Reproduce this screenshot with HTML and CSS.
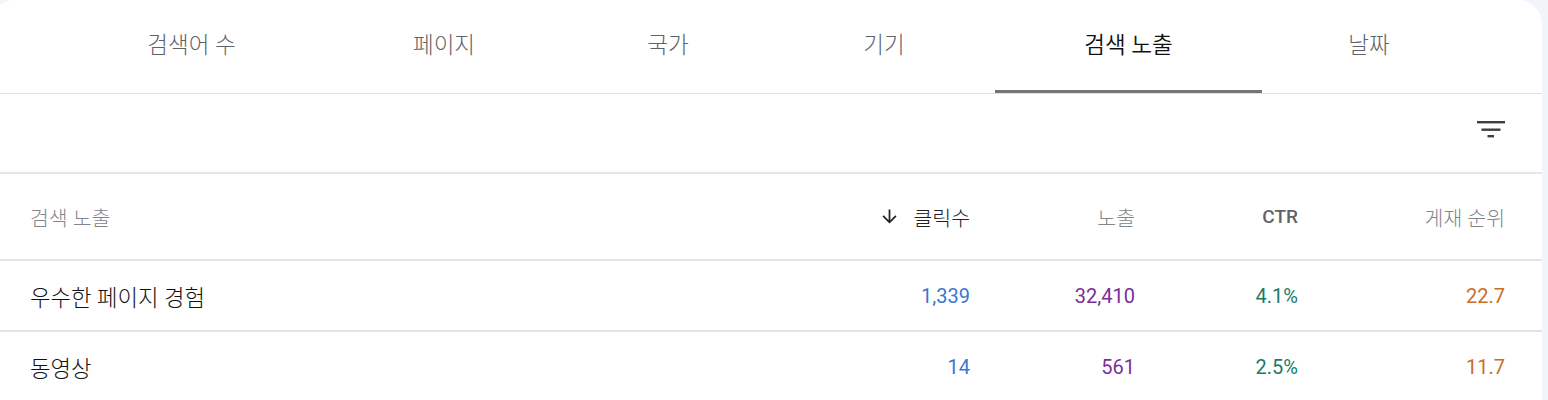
FILE: index.html
```html
<!DOCTYPE html>
<html lang="ko">
<head>
<meta charset="utf-8">
<link rel="stylesheet" href="styles.css">
</head>
<body>
<div class="card">
  <nav class="tabs">
    <div class="tab t1">검색어 수</div>
    <div class="tab t2">페이지</div>
    <div class="tab t3">국가</div>
    <div class="tab t4">기기</div>
    <div class="tab t5 active">검색 노출</div>
    <div class="tab t6">날짜</div>
  </nav>
  <div class="toolbar">
    <svg class="filter" width="30" height="20" viewBox="0 0 30 20">
      <rect x="1" y="2" width="28" height="2.4" fill="#3c4043"/>
      <rect x="5.5" y="9.5" width="19" height="2.4" fill="#3c4043"/>
      <rect x="11.5" y="16" width="6.5" height="2.4" fill="#3c4043"/>
    </svg>
  </div>
  <div class="row head">
    <div class="cell label ko">검색 노출</div>
    <div class="cell num sorted">
      <svg class="arrow" width="21" height="21" viewBox="0 0 24 24"><path d="M20 12l-1.41-1.41L13 16.17V4h-2v12.17l-5.58-5.59L4 12l8 8 8-8z" fill="#202124"/></svg>
      <span class="ko">클릭수</span>
    </div>
    <div class="cell num ko">노출</div>
    <div class="cell num ctr">CTR</div>
    <div class="cell num ko">게재 순위</div>
  </div>
  <div class="row data">
    <div class="cell label ko">우수한 페이지 경험</div>
    <div class="cell num clicks">1,339</div>
    <div class="cell num impr">32,410</div>
    <div class="cell num rate">4.1%</div>
    <div class="cell num pos">22.7</div>
  </div>
  <div class="row data">
    <div class="cell label ko">동영상</div>
    <div class="cell num clicks">14</div>
    <div class="cell num impr">561</div>
    <div class="cell num rate">2.5%</div>
    <div class="cell num pos">11.7</div>
  </div>
</div>
</body>
</html>
```
FILE: styles.css
```css
html, body {
  margin: 0;
  padding: 0;
}
body {
  background: #f1f4fb;
  font-family: Roboto, "Noto Sans CJK KR", sans-serif;
  padding-right: 6px;
  height: 400px;
  overflow: hidden;
}
.card {
  background: #ffffff;
  margin-left: -10px;
  border-radius: 24px 24px 0 0;
  height: 420px;
}
.tabs {
  display: flex;
  height: 93px;
  padding-left: 68px;
  border-bottom: 1px solid #e0e0e0;
}
.tab {
  display: flex;
  align-items: center;
  justify-content: center;
  font-size: 22.5px;
  font-weight: 300;
  color: #5f6368;
  box-sizing: border-box;
  border-bottom: 3px solid transparent;
  padding-bottom: 5px;
}
.t1 { width: 267px; }
.t2 { width: 238px; }
.t3 { width: 210px; }
.t4 { width: 222px; }
.t5 { width: 267px; }
.t6 { width: 214px; }
.tab.active {
  color: #111111;
  font-weight: 350;
  border-bottom-color: #757575;
}
.toolbar {
  display: flex;
  justify-content: flex-end;
  align-items: center;
  height: 78px;
  padding-right: 36px;
  border-bottom: 2px solid #e6e6e6;
}
.filter {
  display: block;
  margin-bottom: 8px;
}
.row {
  display: grid;
  grid-template-columns: 1fr 165px 165px 163px 207px;
  padding: 0 37px 0 40px;
  align-items: center;
  border-bottom: 2px solid #e3e3e3;
}
.row.head {
  height: 85px;
  font-size: 17.5px;
  color: #80868b;
}
.row.head .ko {
  font-size: 20.5px;
  font-weight: 300;
}
.row.data {
  height: 69px;
  font-size: 20px;
  color: #202124;
}
.row.data .ko {
  font-size: 22.3px;
  font-weight: 300;
  color: #111111;
}
.cell.num {
  text-align: right;
}
.sorted {
  display: flex;
  justify-content: flex-end;
  align-items: center;
  gap: 13px;
  color: #202124;
}
.arrow {
  display: block;
}
.ctr {
  font-size: 19px;
  font-weight: 500;
  color: #5f6368;
}
.clicks { color: #3b76d0; }
.impr { color: #7a2f99; }
.rate { color: #1b7a69; }
.pos { color: #c96e2c; }
```
